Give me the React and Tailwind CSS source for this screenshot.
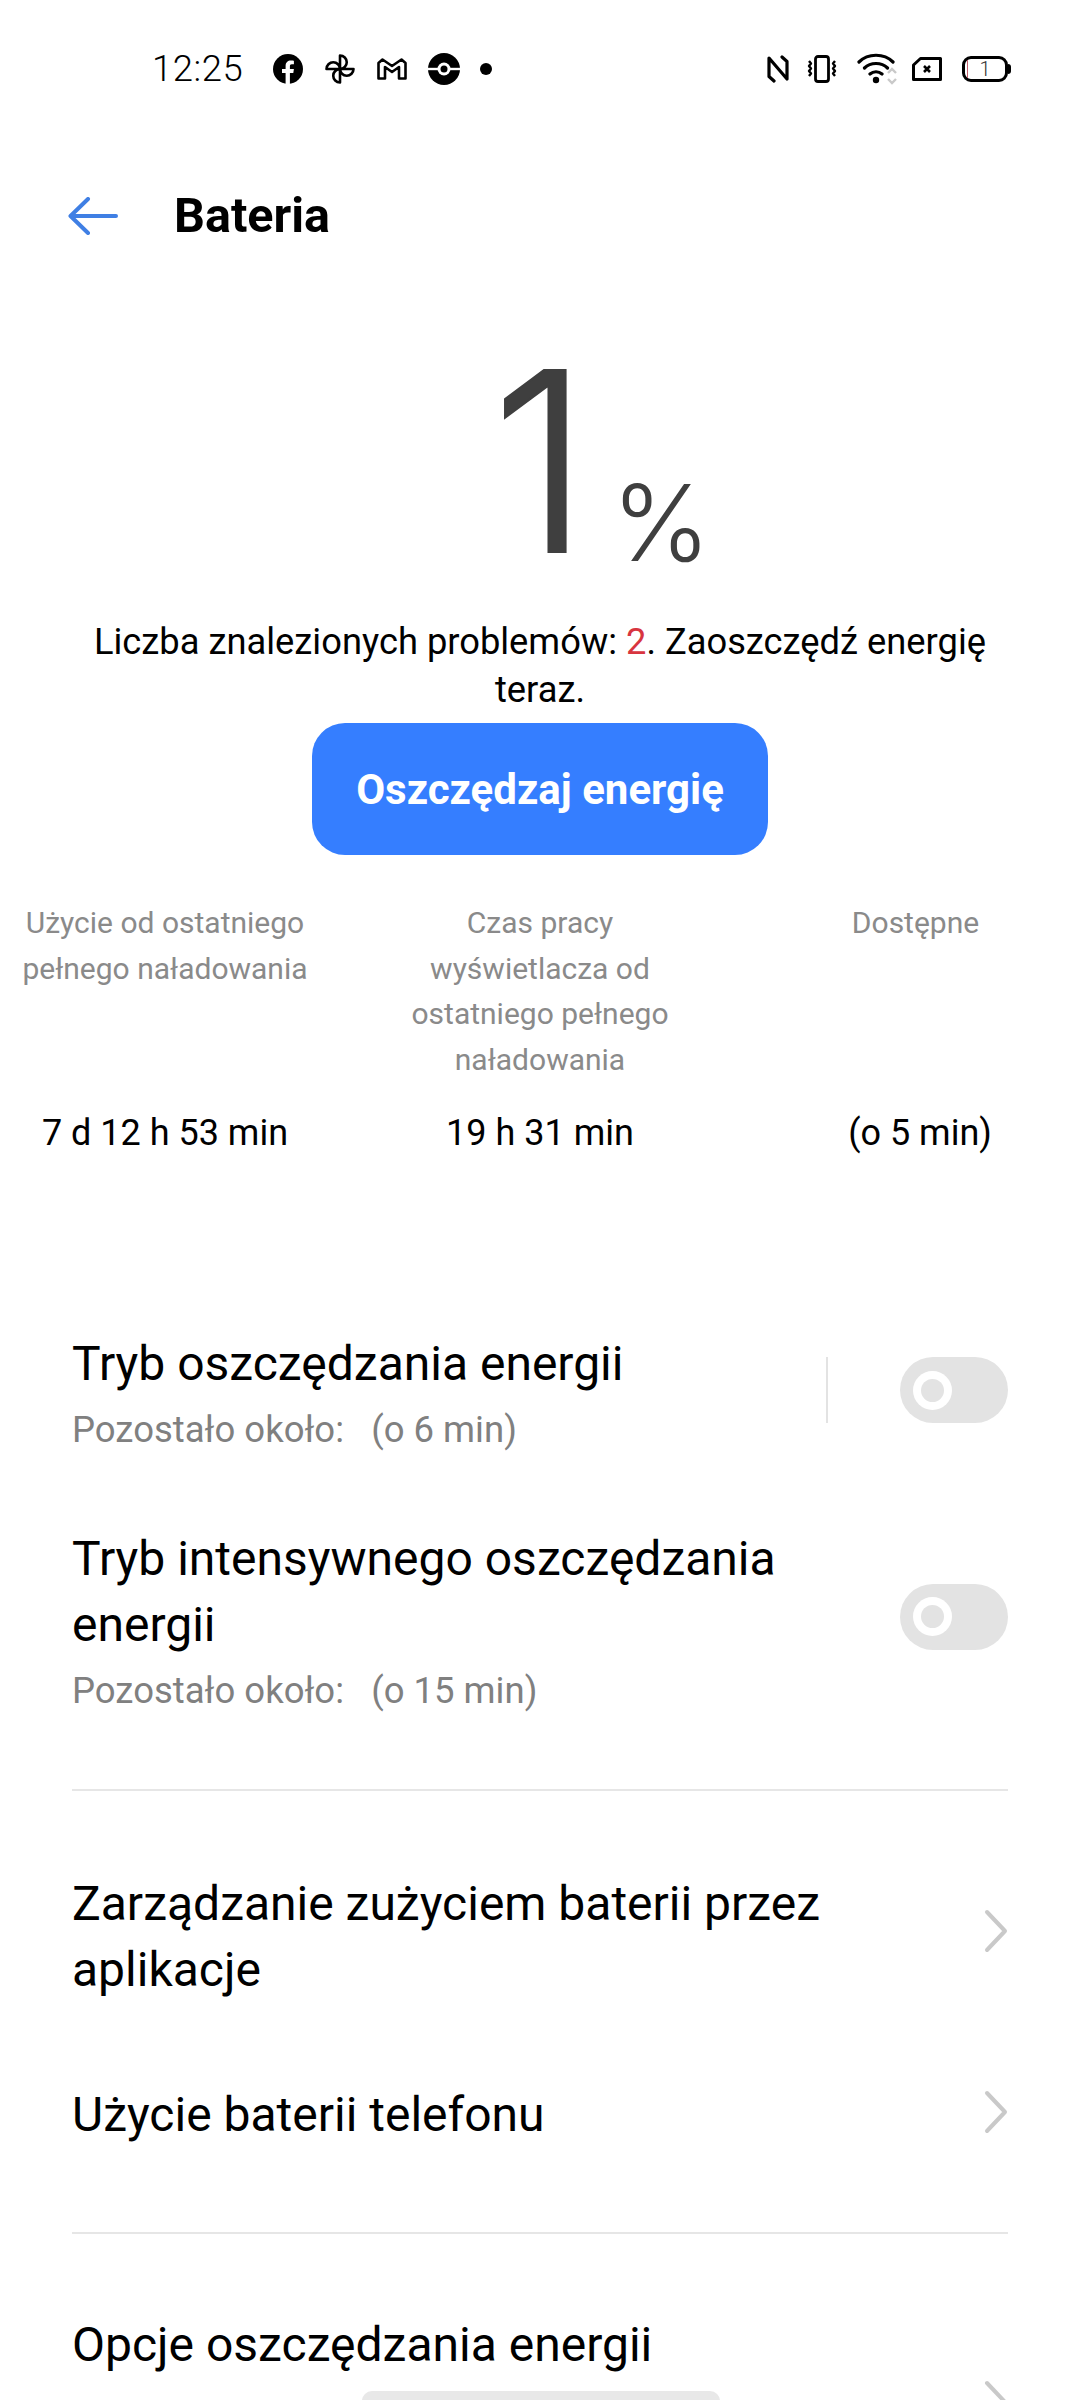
const roboto = "font-['Roboto',sans-serif]";

function Toggle({ className = "" }) {
  return (
    <div className={`w-[108px] h-[66px] rounded-full bg-[#e3e3e3] flex items-center pl-[13px] ${className}`}>
      <div className="w-[39px] h-[39px] rounded-full bg-white flex items-center justify-center">
        <div className="w-[23px] h-[23px] rounded-full bg-[#e3e3e3]" />
      </div>
    </div>
  );
}

function Chevron({ className = "" }) {
  return (
    <svg className={`w-[24px] h-[44px] ${className}`} viewBox="0 0 24 44" fill="none" stroke="#c9c9c9" strokeWidth="4" strokeLinejoin="round" strokeLinecap="round">
      <path d="M3 3l18 19L3 41" />
    </svg>
  );
}

function StatusIcons() {
  return (
    <div className="flex items-center">
      <svg className="w-[30px] h-[30px]" viewBox="0 0 30 30">
        <circle cx="15" cy="15" r="15" fill="#000" />
        <path d="M12.6 30V19H9v-4h3.6v-3c0-3.6 2.2-5.5 5.3-5.5 1.4 0 2.6.1 3 .2v3.6h-2c-1.7 0-2 .8-2 2V15h4l-.6 4h-3.4v11z" fill="#fff" />
      </svg>
      <svg className="w-[30px] h-[30px] ml-[22px]" viewBox="0 0 30 30" fill="none" stroke="#000" strokeWidth="2.6" strokeLinejoin="round">
        <path d="M15 15V1.5a6.75 6.75 0 0 1 0 13.5z" />
        <path d="M15 15h13.5a6.75 6.75 0 0 1-13.5 0z" />
        <path d="M15 15v13.5a6.75 6.75 0 0 1 0-13.5z" />
        <path d="M15 15H1.5a6.75 6.75 0 0 1 13.5 0z" />
      </svg>
      <svg className="w-[30px] h-[22px] ml-[22px]" viewBox="0 0 30 22" fill="none" stroke="#000" strokeWidth="2.6" strokeLinejoin="round">
        <path d="M1.5 20.5V5L5.5 1.5 15 8l9.5-6.5 4 3.5v15.5H22V9l-7 5-7-5v11.5z" />
      </svg>
      <svg className="w-[32px] h-[32px] ml-[21px]" viewBox="0 0 32 32">
        <circle cx="16" cy="16" r="16" fill="#000" />
        <rect x="0" y="14.8" width="32" height="2.4" fill="#fff" />
        <circle cx="16" cy="16" r="6.5" fill="#fff" />
        <circle cx="16" cy="16" r="3.5" fill="#000" />
      </svg>
      <div className="w-[12px] h-[12px] rounded-full bg-black ml-[20px]" />
    </div>
  );
}

function SystemIcons() {
  return (
    <div className="flex items-center">
      <svg className="w-[22px] h-[28px]" viewBox="0 0 22 28" fill="none" stroke="#000" strokeWidth="3.2" strokeLinejoin="round" strokeLinecap="round">
        <path d="M7 26 2 21.5V3l18 21V6.5L15 2" />
      </svg>
      <svg className="w-[32px] h-[28px] ml-[17px]" viewBox="0 0 32 28" fill="none" stroke="#000" strokeWidth="2.4" strokeLinejoin="round">
        <rect x="9.5" y="1.5" width="13" height="25" rx="2.5" strokeWidth="2.8" />
        <path d="M3 6l2 2.5-2 2.5 2 2.5-2 2.5 2 2.5-2 2.5M29 6l-2 2.5 2 2.5-2 2.5 2 2.5-2 2.5 2 2.5" />
      </svg>
      <svg className="w-[42px] h-[32px] ml-[19px]" viewBox="0 0 42 32" fill="none">
        <path d="M2 9C11 0 27 0 36 9M7.5 15C13.5 9 24.5 9 30.5 15M13 21c3.5-3 8.5-3 12 0" stroke="#000" strokeWidth="3.2" strokeLinecap="round" />
        <circle cx="19" cy="27" r="3.2" fill="#000" />
        <path d="M31 20l4-4 4 4M31 26l4 4 4-4" stroke="#c9c9c9" strokeWidth="2.4" />
      </svg>
      <svg className="w-[30px] h-[24px] ml-[13px]" viewBox="0 0 30 24" fill="none">
        <path d="M8.5 1.5H28.5V22.5H1.5V8z" stroke="#000" strokeWidth="3" strokeLinejoin="round" />
        <path d="M12 9l6 6M18 9l-6 6" stroke="#000" strokeWidth="2.6" />
      </svg>
      <div className="ml-[20px] flex items-center">
        <div className={`${roboto} w-[46px] h-[26px] rounded-[9px] border-[3px] border-black flex items-center justify-center text-[20px] font-light leading-none text-[#333] relative`}>
          <div className="absolute left-[2px] top-[1px] bottom-[1px] w-px bg-[#c2606e]" />
          1
        </div>
        <div className="w-[3px] h-[10px] bg-black rounded-r-full" />
      </div>
    </div>
  );
}

function Row({ children, className = "" }) {
  return (
    <div className={`flex items-center justify-between px-[72px] ${className}`}>
      {children}
    </div>
  );
}

function Stat({ label, value, className = "", labelClass = "" }) {
  return (
    <div className={`flex flex-col items-center ${className}`}>
      <div className={`h-[181px] text-center text-[30px] leading-[45.5px] text-[#8a8a8a] font-normal ${labelClass}`}>
        {label}
      </div>
      <div className="text-[36px] leading-[45px] text-black mt-[30px] whitespace-nowrap">{value}</div>
    </div>
  );
}

export default function App() {
  return (
    <div className={`${roboto} w-[1080px] h-[2400px] bg-white overflow-hidden`}>
      {/* status bar */}
      <div className="h-[138px] flex items-center pl-[152px] pr-[69px] justify-between">
        <div className="flex items-center">
          <span className="text-[36.5px] leading-none text-black font-light tracking-[0.5px] mr-[30px]">12:25</span>
          <StatusIcons />
        </div>
        <SystemIcons />
      </div>

      {/* header */}
      <div className="h-[156px] flex items-center pl-[68px]">
        <svg className="w-[50px] h-[38px]" viewBox="0 0 50 38" fill="none" stroke="#3f7fe4" strokeWidth="4" strokeLinecap="round" strokeLinejoin="round">
          <path d="M20 2 2.5 19 20 36M2.5 19H48" />
        </svg>
        <h1 className="ml-[56px] text-[48.5px] leading-none font-bold text-black">Bateria</h1>
      </div>

      {/* percent */}
      <div className="h-[324px] flex items-end justify-center text-[#3f3f3f] font-['Inter',sans-serif] font-light pb-[57px] pl-[122px]">
        <span className="text-[250px] leading-[200px] [-webkit-text-stroke:2px_#3f3f3f]">1</span>
        <span className="text-[106px] leading-[76px] ml-[22px]">%</span>
      </div>

      <p className="text-center text-[36.3px] leading-[48px] text-black px-[72px]">
        Liczba znalezionych problemów: <span className="text-[#d8353f]">2</span>. Zaoszczędź energię teraz.
      </p>

      <div className="flex justify-center mt-[9px]">
        <button className="w-[456px] h-[132px] rounded-[33px] bg-[#357eff] text-white text-[42px] font-bold">
          Oszczędzaj energię
        </button>
      </div>

      {/* stats */}
      <div className="grid grid-cols-[330px_420px_330px] mt-[45px]">
        <Stat label="Użycie od ostatniego pełnego naładowania" value="7 d 12 h 53 min" />
        <Stat label="Czas pracy wyświetlacza od ostatniego pełnego naładowania" value="19 h 31 min" className="px-[60px]" />
        <Stat label="Dostępne" value="(o 5 min)" className="pl-[10px]" labelClass="mr-[9px]" />
      </div>

      {/* power saving */}
      <Row className="mt-[175px] h-[124px]">
        <div>
          <div className="text-[48px] leading-[66px] text-black">Tryb oszczędzania energii</div>
          <div className="text-[36.5px] leading-[50px] text-[#808080] mt-[8px]">Pozostało około: &nbsp; (o 6 min)</div>
        </div>
        <div className="flex items-center mb-[6px]">
          <div className="w-[2px] h-[66px] bg-[#e3e3e3] mr-[72px]" />
          <Toggle />
        </div>
      </Row>

      <Row className="mt-[71px]">
        <div className="w-[760px]">
          <div className="text-[48px] leading-[66px] text-black">Tryb intensywnego oszczędzania energii</div>
          <div className="text-[36.5px] leading-[50px] text-[#808080] mt-[8px]">Pozostało około: &nbsp; (o 15 min)</div>
        </div>
        <Toggle className="mb-[9px]" />
      </Row>

      <div className="mx-[72px] h-[2px] bg-[#e6e6e6] mt-[73px]" />

      <Row className="mt-[80px]">
        <div className="text-[48px] leading-[66px] text-black w-[800px]">Zarządzanie zużyciem baterii przez aplikacje</div>
        <Chevron className="mb-[12px]" />
      </Row>

      <Row className="mt-[79px]">
        <div className="text-[48px] leading-[66px] text-black">Użycie baterii telefonu</div>
        <Chevron className="mb-[6px]" />
      </Row>

      <div className="mx-[72px] h-[2px] bg-[#e6e6e6] mt-[84px]" />

      <div className="relative mt-[78px] px-[72px]">
        <div className="text-[48px] leading-[66px] text-black">Opcje oszczędzania energii</div>
        <div className="flex text-[36.5px] leading-[50px] text-[#808080] mt-[13px]">
          <span className="w-[290px]">Automatycznie</span>
          <span className="w-[358px] rounded-t-[10px] bg-[#e8e8e8] pl-[4px]">baterii poniżej 20%</span>
          <span className="pl-[20px]">i włącz</span>
        </div>
        <Chevron className="absolute right-[72px] top-[68px]" />
      </div>
    </div>
  );
}
